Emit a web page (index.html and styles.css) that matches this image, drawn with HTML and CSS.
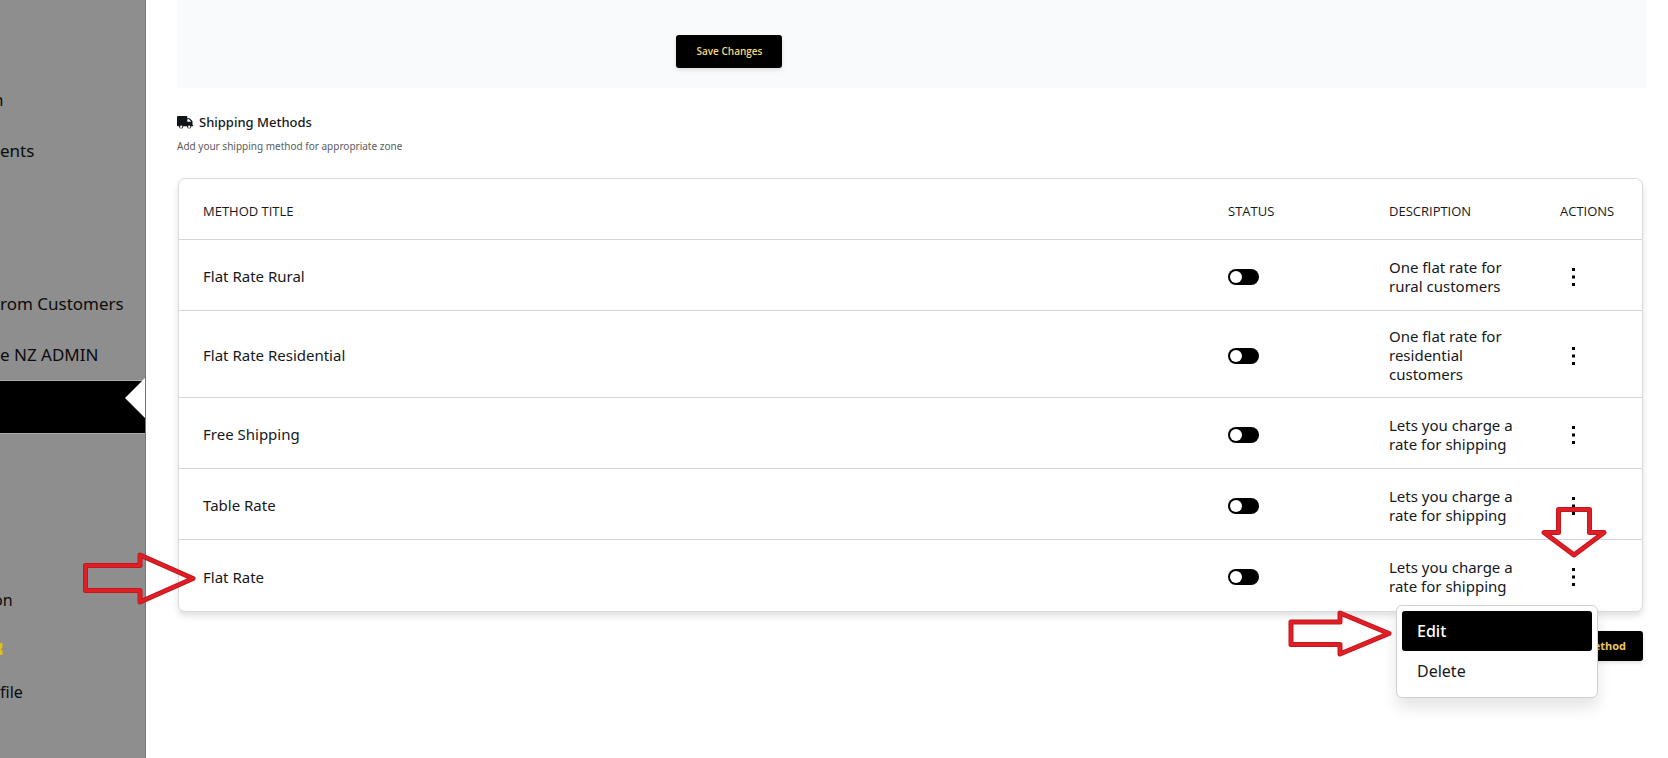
FILE: index.html
```html
<!DOCTYPE html>
<html lang="en">
<head>
<meta charset="utf-8">
<title>Shipping Methods</title>
<link rel="stylesheet" href="styles.css">
</head>
<body>
<div class="app">
  <nav class="sidebar" aria-label="Main">
    <ul class="nav-list">
      <li><a class="nav-link nav-link-cut" href="#">n</a></li>
      <li><a class="nav-link" href="#">ents</a></li>
      <li><a class="nav-link" href="#"></a></li>
      <li><a class="nav-link" href="#"></a></li>
      <li><a class="nav-link" href="#">rom Customers</a></li>
      <li><a class="nav-link" href="#">e NZ ADMIN</a></li>
      <li><a class="nav-link nav-link-active" href="#" aria-current="page"></a></li>
    </ul>
    <ul class="nav-list nav-list-small">
      <li><a class="nav-link nav-link-cut" href="#">on</a></li>
      <li><a class="nav-link" href="#"><svg width="3" height="20" viewBox="0 0 3 20"><path d="M0 7h2.500v4L1 13l1.500 2v4H0z" fill="#e3bd1c"/></svg></a></li>
      <li><a class="nav-link" href="#">file</a></li>
    </ul>
  </nav>

  <main class="main">
    <div class="panel">
      <button class="btn btn-save" type="button">Save Changes</button>
    </div>

    <header class="section-head">
      <h2 class="section-title">
        <svg class="truck" width="16" height="13" viewBox="0 0 16 13"><path fill="#111418" d="M1 0h8.500q.8 0 .8.800V2.200h1.900l.7.300 2.300 2.300.3.700v3.500h.5v1.300h-1.600a2.200 2.200 0 0 1-4.400 0H6.400a2.200 2.200 0 0 1-4.400 0H1q-1 0-1-1V1q0-1 1-1zM10.300 3.300v2.500h3.700v-.4l-2-2.100z"/><circle cx="4.200" cy="10.700" r="1.200" fill="#fff"/><circle cx="12.200" cy="10.700" r="1.200" fill="#fff"/></svg>
        Shipping Methods
      </h2>
      <p class="section-note">Add your shipping method for appropriate zone</p>
    </header>

    <div class="card">
      <table class="methods">
        <colgroup><col><col class="col-status"><col class="col-desc"><col class="col-actions"></colgroup>
        <thead>
          <tr><th scope="col">METHOD TITLE</th><th scope="col">STATUS</th><th scope="col">DESCRIPTION</th><th scope="col">ACTIONS</th></tr>
        </thead>
        <tbody>
          <tr>
            <td>Flat Rate Rural</td>
            <td><input class="toggle" type="checkbox" aria-label="Flat Rate Rural status"></td>
            <td class="desc">One flat rate for rural customers</td>
            <td><button class="dots" type="button" aria-label="Actions"><svg width="3" height="18" viewBox="0 0 3 18"><path d="M0 0h3v3H0zM0 7.500h3v3H0zM0 15h3v3H0z"/></svg></button></td>
          </tr>
          <tr>
            <td>Flat Rate Residential</td>
            <td><input class="toggle" type="checkbox" aria-label="Flat Rate Residential status"></td>
            <td class="desc">One flat rate for residential customers</td>
            <td><button class="dots" type="button" aria-label="Actions"><svg width="3" height="18" viewBox="0 0 3 18"><path d="M0 0h3v3H0zM0 7.500h3v3H0zM0 15h3v3H0z"/></svg></button></td>
          </tr>
          <tr>
            <td>Free Shipping</td>
            <td><input class="toggle" type="checkbox" aria-label="Free Shipping status"></td>
            <td class="desc">Lets you charge a rate for shipping</td>
            <td><button class="dots" type="button" aria-label="Actions"><svg width="3" height="18" viewBox="0 0 3 18"><path d="M0 0h3v3H0zM0 7.500h3v3H0zM0 15h3v3H0z"/></svg></button></td>
          </tr>
          <tr>
            <td>Table Rate</td>
            <td><input class="toggle" type="checkbox" aria-label="Table Rate status"></td>
            <td class="desc">Lets you charge a rate for shipping</td>
            <td><button class="dots" type="button" aria-label="Actions"><svg width="3" height="18" viewBox="0 0 3 18"><path d="M0 0h3v3H0zM0 7.500h3v3H0zM0 15h3v3H0z"/></svg></button></td>
          </tr>
          <tr>
            <td class="anchor">Flat Rate
              <svg class="arrow arrow-row" width="116" height="56" viewBox="0 0 116 56"><g class="arrow-shape"><path class="edge" d="M4.500 15.500H59V5L112 28.500 59 52V40.500H4.500z"/><path class="core" d="M4.500 15.500H59V5L112 28.500 59 52V40.500H4.500z"/></g></svg>
            </td>
            <td><input class="toggle" type="checkbox" aria-label="Flat Rate status"></td>
            <td class="desc">Lets you charge a rate for shipping</td>
            <td class="anchor">
              <button class="dots" type="button" aria-label="Actions" aria-expanded="true"><svg width="3" height="18" viewBox="0 0 3 18"><path d="M0 0h3v3H0zM0 7.500h3v3H0zM0 15h3v3H0z"/></svg></button>
              <svg class="arrow arrow-down" width="70" height="54" viewBox="0 0 70 54"><g class="arrow-shape"><path class="edge" d="M19.500 4.500H50.500V27.500H65L35 50 5 27.500H19.500z"/><path class="core" d="M19.500 4.500H50.500V27.500H65L35 50 5 27.500H19.500z"/></g></svg>
              <div class="menu" role="menu">
                <button class="menu-item menu-item-active" type="button" role="menuitem">Edit</button>
                <button class="menu-item" type="button" role="menuitem">Delete</button>
                <svg class="arrow arrow-menu" width="108" height="50" viewBox="0 0 108 50"><g class="arrow-shape"><path class="edge" d="M5 14H54V5L103 25.500 54 46V36.500H5z"/><path class="core" d="M5 14H54V5L103 25.500 54 46V36.500H5z"/></g></svg>
              </div>
            </td>
          </tr>
        </tbody>
      </table>
    </div>

    <div class="footer">
      <button class="btn btn-add" type="button">Add Shipping Method</button>
    </div>
  </main>
</div>
</body>
</html>
```
FILE: styles.css
```css
* { box-sizing: border-box; }

body {
  margin: 0;
  background: #fff;
  color: #16181b;
  font-family: "Open Sans", "Noto Sans", sans-serif;
  font-size: 15px;
}

button { font-family: inherit; cursor: pointer; }

.app {
  display: flex;
  min-height: 100vh;
  overflow: hidden;
}

/* Sidebar */
.sidebar {
  flex: 0 0 146px;
  padding-top: 74px;
  background: #8e8e8e;
  border-right: 1px solid #757575;
}

.nav-list {
  margin: 0;
  padding: 0;
  list-style: none;
}

.nav-link {
  display: flex;
  align-items: center;
  height: 51px;
  color: #0c0c0c;
  font-family: "Noto Sans", "Open Sans", sans-serif;
  font-size: 17px;
  white-space: nowrap;
  text-decoration: none;
}

.nav-link-cut { margin-left: -7px; }

.nav-link-active {
  position: relative;
  height: 52px;
  margin-top: 1px;
  background: #000;
  box-shadow: 0 0 0 1px #aaa;
  clip-path: inset(-6px 0 -1px 0);
}

.nav-link-active::after {
  content: "";
  position: absolute;
  top: -3px;
  right: 0;
  border: 20px solid transparent;
  border-right-color: #fff;
  border-left-width: 0;
}

.nav-list-small { margin-top: 144px; }
.nav-list-small .nav-link { height: 46px; font-size: 16px; }

/* Main column */
.main {
  flex: 1;
  min-width: 0;
  padding: 0 22px 40px 31px;
}

.panel {
  padding: 35px 0 20px 34%;
  background: #f9fafc;
}

.btn {
  display: block;
  border: 0;
  border-radius: 3px;
  background: #000;
  color: #f5d77a;
  font-size: 11px;
  line-height: 15px;
  box-shadow: 0 2px 4px rgba(0, 0, 0, 0.12);
}

.btn-save { padding: 9px 20px; font-size: 10px; font-weight: 600; }
.btn-add { padding: 7px 17px 8px; font-weight: 700; color: #efc75e; }

.section-head { padding: 24px 0 23px; }

.section-title {
  display: flex;
  align-items: center;
  gap: 6px;
  margin: 0;
  font-family: "Noto Sans", "Open Sans", sans-serif;
  font-size: 13px;
  font-weight: 500;
  line-height: 20px;
}

.section-note {
  margin: 5px 0 0;
  color: #5a5c60;
  font-family: "Noto Sans", "Open Sans", sans-serif;
  font-size: 10px;
  line-height: 18px;
}

/* Methods table */
.card {
  margin: 0 3px 0 1px;
  border: 1px solid #dcdcde;
  border-radius: 7px;
  background: #fff;
  box-shadow: 0 4px 6px rgba(0, 0, 0, 0.12);
}

.methods {
  width: 100%;
  table-layout: fixed;
  border-spacing: 0;
}

.col-status { width: 161px; }
.col-desc { width: 171px; }
.col-actions { width: 106px; }

.methods th,
.methods td {
  padding: 16px 24px 13px;
  border-bottom: 1px solid #d6d6d8;
  text-align: left;
  vertical-align: middle;
}

.methods th {
  height: 61px;
  font-size: 13px;
  font-weight: 400;
  white-space: nowrap;
}

.methods td {
  height: 71px;
  font-family: "Noto Sans", "Open Sans", sans-serif;
  font-size: 15px;
  line-height: 19px;
}

.methods .desc { padding-right: 16px; }

.methods tbody tr:last-child td { border-bottom: 0; }

.anchor { position: relative; }

.toggle {
  display: flex;
  align-items: center;
  appearance: none;
  width: 31px;
  height: 16px;
  margin: 0;
  padding: 2px;
  border-radius: 8px;
  background: #000;
}

.toggle::before {
  content: "";
  width: 12px;
  height: 12px;
  border-radius: 50%;
  background: #fff;
}

.dots {
  display: flex;
  justify-content: center;
  width: 27px;
  padding: 0;
  border: 0;
  background: none;
}

/* Row menu */
.menu {
  position: absolute;
  top: 65px;
  right: 44px;
  z-index: 2;
  width: 202px;
  padding: 5px 5px 6px;
  border: 1px solid #cfcfd2;
  border-radius: 6px;
  background: #fff;
  box-shadow: 0 10px 15px rgba(0, 0, 0, 0.1);
}

.menu-item {
  display: block;
  width: 100%;
  height: 40px;
  padding: 0 15px;
  border: 0;
  border-radius: 3px;
  background: none;
  color: #16181b;
  font-family: "Noto Sans", "Open Sans", sans-serif;
  font-size: 16px;
  text-align: left;
}

.menu-item-active {
  background: #000;
  color: #fff;
  font-weight: 500;
}

.footer {
  display: flex;
  justify-content: flex-end;
  margin: 19px 3px 0;
}

/* Pointer arrows */
.arrow { position: absolute; z-index: 3; }
.arrow-shape { fill: none; stroke-linejoin: round; }
.edge { stroke: #c4161d; stroke-width: 5px; }
.core { stroke: #e01e26; stroke-width: 3px; }
.arrow-row { top: 10px; left: -98px; }
.arrow-down { top: -35px; left: 3px; }
.arrow-menu { top: 2px; left: -111px; }
```
